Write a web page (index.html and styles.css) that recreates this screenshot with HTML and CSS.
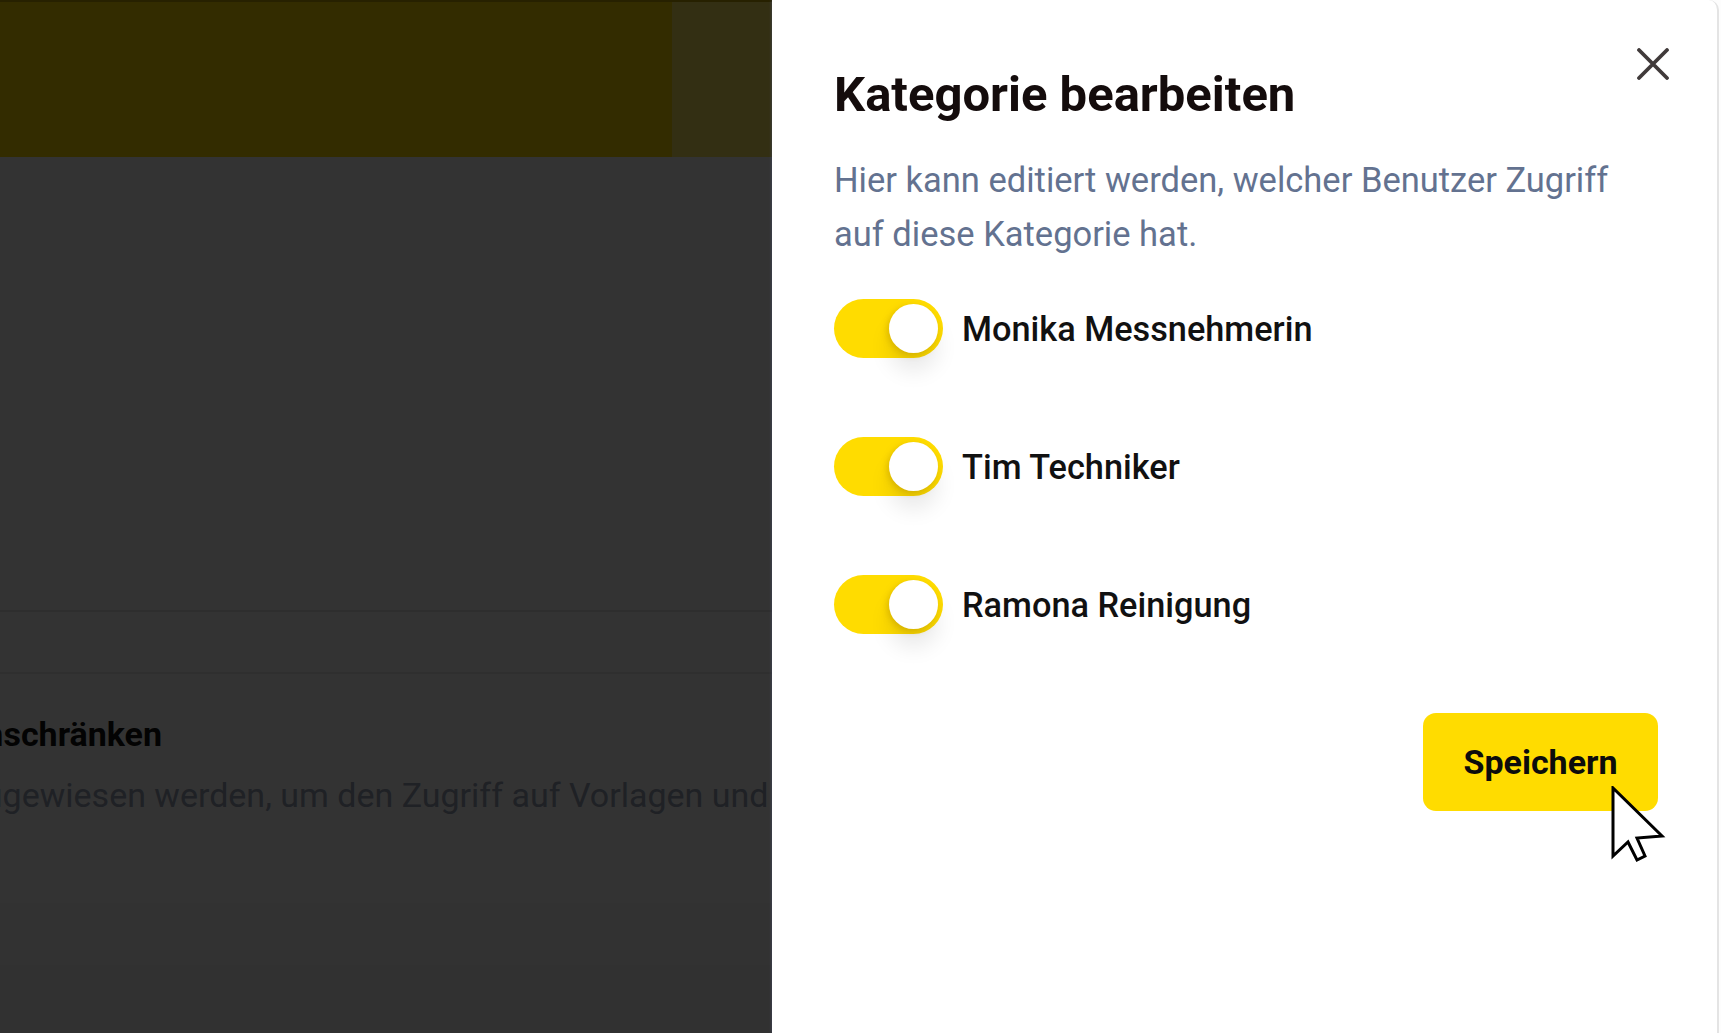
FILE: index.html
```html
<!DOCTYPE html>
<html lang="de">
<head>
<meta charset="utf-8">
<title>Kategorie bearbeiten</title>
<link rel="stylesheet" href="styles.css">
</head>
<body>
<div class="page">
  <header class="topbar">
    <div class="topbar-main"></div>
    <div class="topbar-side"></div>
  </header>
  <main class="content">
    <div class="block-a"></div>
    <div class="row-b"></div>
    <section class="card">
      <h2 class="card-title"><span class="shift-a">einschränken</span></h2>
      <p class="card-text"><span class="shift-b">zugewiesen werden, um den Zugriff auf Vorlagen und</span></p>
    </section>
    <div class="row-c"></div>
    <div class="row-d"></div>
  </main>
</div>
<div class="overlay"></div>
<aside class="drawer">
  <div class="drawer-body">
    <button class="close" aria-label="Schließen">
      <svg width="34" height="32" viewBox="0 0 34 32"><path d="M3 2 L31 30 M31 2 L3 30" stroke="#403a3a" stroke-width="3.8" stroke-linecap="round" fill="none"/></svg>
    </button>
    <h1 class="title">Kategorie bearbeiten</h1>
    <p class="desc">Hier kann editiert werden, welcher Benutzer Zugriff auf diese Kategorie hat.</p>
    <ul class="users">
      <li class="user"><span class="toggle"><span class="knob"></span></span><span class="name">Monika Messnehmerin</span></li>
      <li class="user"><span class="toggle"><span class="knob"></span></span><span class="name">Tim Techniker</span></li>
      <li class="user"><span class="toggle"><span class="knob"></span></span><span class="name">Ramona Reinigung</span></li>
    </ul>
    <div class="actions">
      <button class="save">Speichern</button>
    </div>
    <svg class="cursor" width="56" height="78" viewBox="0 0 56 78"><path d="M2 2 V70 L17 56 L26 74 L34 70 L26 52 L51 50 Z" fill="#fff" stroke="#000" stroke-width="3" stroke-linejoin="miter"/></svg>
  </div>
</aside>
</body>
</html>
```

FILE: styles.css
```css
* { box-sizing: border-box; }
html, body { margin: 0; padding: 0; }
body {
  width: 1721px;
  height: 1033px;
  overflow: hidden;
  font-family: Roboto, "Liberation Sans", Arial, sans-serif;
  background: #ffffff;
}

.page { width: 1721px; height: 1033px; overflow: hidden; }

.topbar {
  display: flex;
  height: 157px;
  background: #ffdc00;
  border-top: 2px solid #c0a600;
}
.topbar-main { width: 672px; }
.topbar-side { width: 104px; background: #ffe862; }

.content { display: flex; flex-direction: column; overflow: hidden; }
.block-a { height: 453px; }
.row-b { height: 62px; border-top: 2px solid #e6e6e6; }
.card {
  height: 231px;
  border-top: 2px solid #ececec;
  padding-top: 40px;
  white-space: nowrap;
}
.card-title {
  margin: 0;
  font-size: 34px;
  line-height: 40px;
  font-weight: 700;
  color: #111111;
}
.card-text {
  margin: 21px 0 0;
  font-size: 34px;
  line-height: 40px;
  font-weight: 400;
  color: #9aa3b8;
}
.shift-a { display: inline-block; margin-left: -43px; }
.shift-b { display: inline-block; margin-left: -33px; }
.row-c { height: 62px; background: #f8f8f8; }
.row-d { height: 80px; background: #f4f4f4; }

.overlay {
  position: fixed;
  inset: 0;
  background: rgba(0, 0, 0, 0.8);
}

.drawer {
  position: fixed;
  top: 0;
  left: 772px;
  right: 0;
  bottom: 0;
  background: #fdfdfd;
  box-shadow: -1px 0 2px rgba(80, 90, 130, 0.35);
}
.drawer-body {
  position: relative;
  height: 100%;
  margin-right: 2px;
  background: #ffffff;
  border-right: 2px solid #e4e4e4;
  border-top-right-radius: 10px;
  padding: 67px 59px 0 62px;
}

.close {
  position: absolute;
  top: 48px;
  right: 47px;
  width: 34px;
  height: 32px;
  padding: 0;
  border: 0;
  background: none;
  display: flex;
}

.title {
  margin: 0;
  font-size: 49px;
  line-height: 56px;
  font-weight: 700;
  color: #140c0c;
}
.desc {
  margin: 30px 0 0;
  font-size: 34.5px;
  line-height: 54px;
  color: #637290;
  max-width: 800px;
}

.users {
  list-style: none;
  margin: 38px 0 0;
  padding: 0;
  display: flex;
  flex-direction: column;
  gap: 79px;
}
.user {
  display: flex;
  align-items: center;
  gap: 19px;
  height: 59px;
}
.toggle {
  position: relative;
  flex: none;
  width: 109px;
  height: 59px;
  border-radius: 30px;
  background: #ffdc00;
}
.knob {
  position: absolute;
  top: 5px;
  right: 5px;
  width: 49px;
  height: 49px;
  border-radius: 50%;
  background: #ffffff;
  box-shadow: -2px 2px 6px rgba(170, 130, 0, 0.35), 0 18px 22px rgba(0, 0, 0, 0.09);
}
.name {
  font-size: 34.3px;
  font-weight: 500;
  color: #111111;
  line-height: 40px;
}

.actions {
  display: flex;
  justify-content: flex-end;
  margin-top: 79px;
}
.save {
  width: 235px;
  height: 98px;
  border: 0;
  border-radius: 13px;
  background: #ffdc00;
  font-family: Roboto, "Liberation Sans", Arial, sans-serif;
  font-size: 34px;
  font-weight: 700;
  color: #0c0c0c;
  padding: 0;
}

.cursor {
  position: absolute;
  left: 839px;
  top: 786px;
}
```
